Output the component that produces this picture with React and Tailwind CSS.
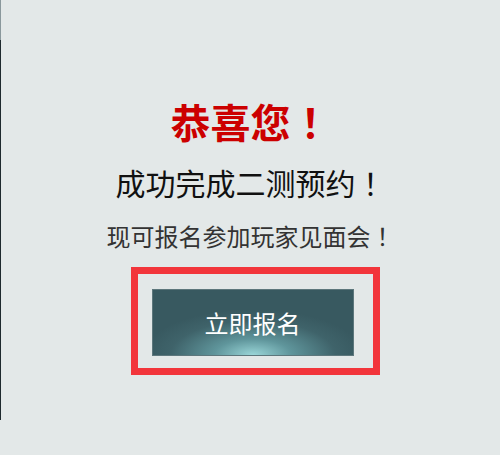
function Bang() {
  // centred full-width mark, as in the original font
  return <span style={{ fontFamily: '"Noto Sans CJK TC", "Noto Sans CJK JP", sans-serif' }}>！</span>
}

export default function App() {
  return (
    <div
      className="w-[500px] h-[455px] bg-[#e3e8e8] flex overflow-hidden"
      style={{ fontFamily: '"Noto Sans CJK SC", "Noto Sans", sans-serif' }}
    >
      {/* left edge of the underlying page */}
      <div className="w-px flex flex-col shrink-0">
        <div className="h-[40px] bg-[#8a989c]" />
        <div className="h-[380px] bg-[#1e2a2e]" />
      </div>

      <div className="flex-1 flex flex-col items-center pt-[97px]">
        <h1 className="text-[40px] leading-[48px] font-bold text-[#cc0000]">恭喜您<Bang /></h1>
        <p className="mt-[19px] text-[30px] leading-[36px] text-[#111]">成功完成二测预约<Bang /></p>
        <p className="mt-[21px] text-[24px] leading-[30px] text-[#333]">现可报名参加玩家见面会<Bang /></p>

        <div className="mt-[16px] ml-[9px] w-[249px] h-[108px] border-[7px] border-[#f2353b] pl-[14px] pt-[15px]">
          <button className="w-[202px] h-[67px] border border-[#5d777c] bg-[radial-gradient(ellipse_55%_70%_at_50%_100%,#9ad6d8_0%,#5f959b_35%,#3f636a_75%,#385960_100%)] text-white text-[24px] leading-none">
            立即报名
          </button>
        </div>
      </div>
    </div>
  )
}
